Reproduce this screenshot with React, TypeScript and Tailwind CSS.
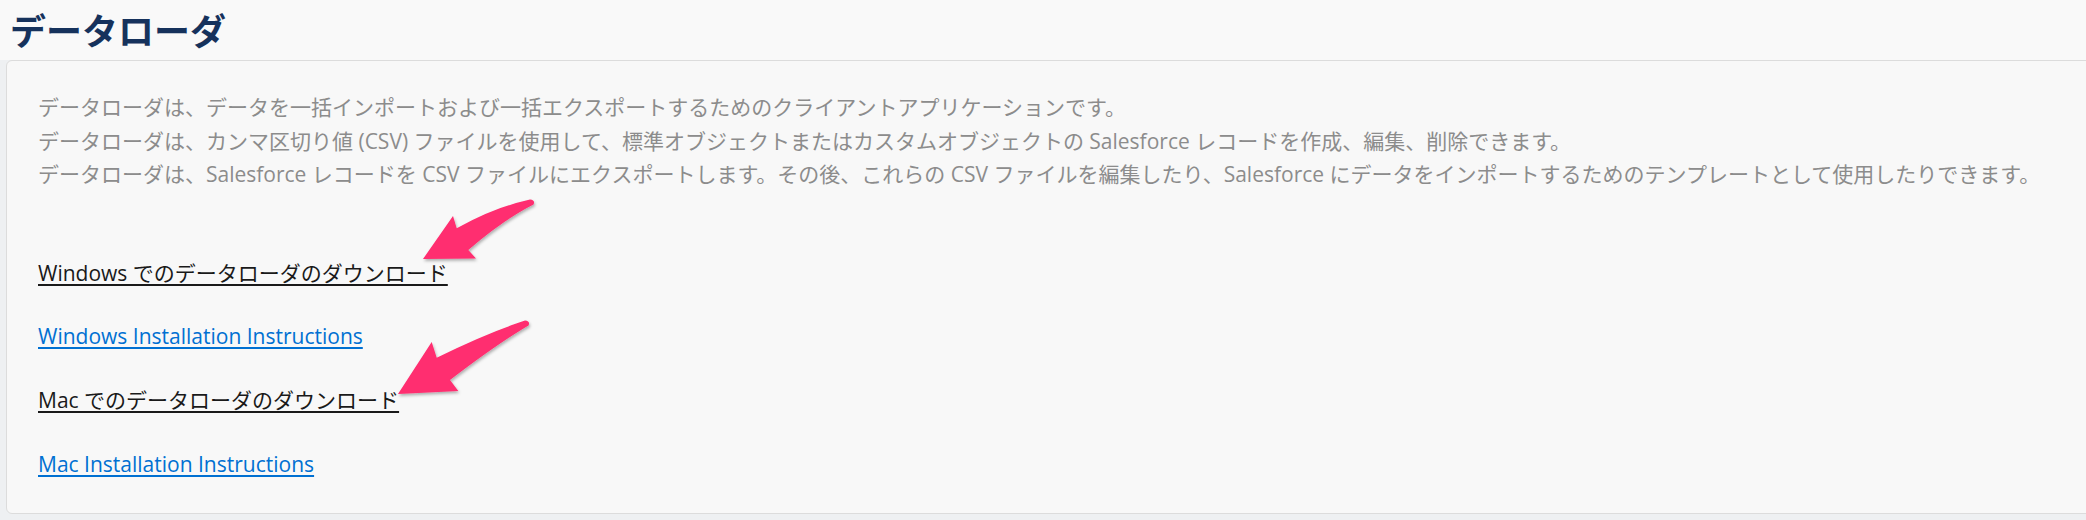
import React from "react";

const links = [
  { text: "Windows でのデータローダのダウンロード", blue: false },
  { text: "Windows Installation Instructions", blue: true },
  { text: "Mac でのデータローダのダウンロード", blue: false },
  { text: "Mac Installation Instructions", blue: true },
];

export default function App() {
  return (
    <div className="relative w-[2086px] h-[520px] overflow-hidden bg-[#f9f9f9] font-['Open_Sans','Noto_Sans_CJK_JP',sans-serif]">
      <div className="h-[60px] pl-[10px] pt-[8px]">
        <h1 className="text-[36px] font-bold leading-[42px] text-[#16325c] font-['Noto_Sans_CJK_JP',sans-serif]">
          データローダ
        </h1>
      </div>
      <div className="bg-[#eef0f2] pl-[6px] pb-[6px]">
        <div className="mr-[-20px] h-[454px] rounded-l-[6px] border-[1.5px] border-[#dcdcdc] bg-[#f8f8f8] pl-[31px] pt-[30px]">
          <div className="text-[21px] leading-[33.5px] text-[#8c8c8c]">
            <p>データローダは、データを一括インポートおよび一括エクスポートするためのクライアントアプリケーションです。</p>
            <p>データローダは、カンマ区切り値 (CSV) ファイルを使用して、標準オブジェクトまたはカスタムオブジェクトの Salesforce レコードを作成、編集、削除できます。</p>
            <p>データローダは、Salesforce レコードを CSV ファイルにエクスポートします。その後、これらの CSV ファイルを編集したり、Salesforce にデータをインポートするためのテンプレートとして使用したりできます。</p>
          </div>
          <div className="mt-[50px] text-[21px] leading-[63.7px]">
            {links.map((l) => (
              <div key={l.text}>
                <a
                  href="#"
                  className={
                    l.blue
                      ? "text-[#0070d2] underline decoration-[1.5px] underline-offset-[3px]"
                      : "text-[#1a1a1a] underline decoration-[2px] underline-offset-[3px]"
                  }
                >
                  {l.text}
                </a>
              </div>
            ))}
          </div>
        </div>
      </div>
      <svg
        className="pointer-events-none absolute left-0 top-0"
        width="2086"
        height="520"
        viewBox="0 0 2086 520"
      >
        <defs>
          <filter id="sh" x="-20%" y="-20%" width="140%" height="140%">
            <feDropShadow dx="1" dy="2" stdDeviation="1.5" floodColor="#000" floodOpacity="0.3" />
          </filter>
        </defs>
        <path
          d="M530 199.5 Q495 207 456.7 228.3 L453 216 L423 259 L476 258.5 L468.3 250 Q503 220 533.5 204.5 Q535.5 200 530 199.5 Z"
          fill="#ff2d6f"
          filter="url(#sh)"
        />
        <path
          d="M525 320.5 Q487 333 436.7 357.7 L431.7 342 L398 394 L458.3 391 L450 380 Q497 344 528.5 325.5 Q530.5 321 525 320.5 Z"
          fill="#ff2d6f"
          filter="url(#sh)"
        />
      </svg>
    </div>
  );
}
